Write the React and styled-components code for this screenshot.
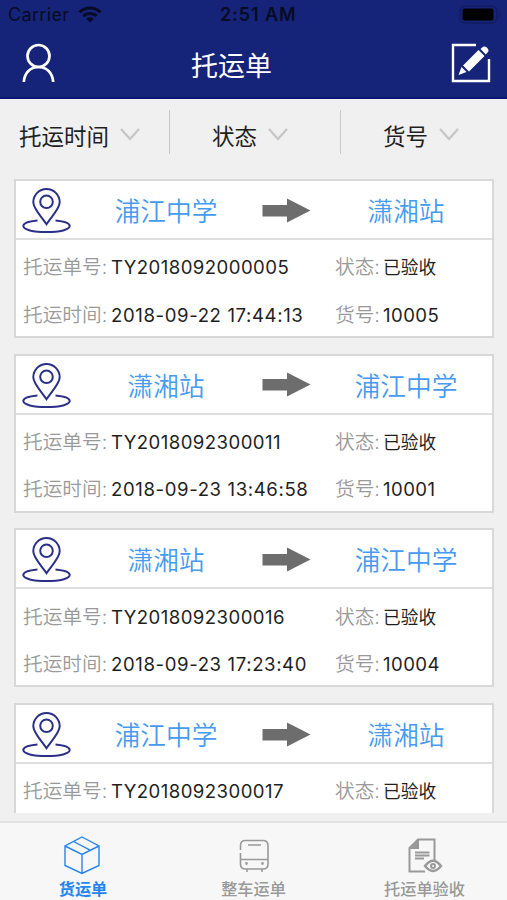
import styled, { createGlobalStyle } from 'styled-components';

const GlobalStyle = createGlobalStyle`
  * {
    box-sizing: border-box;
  }

  body {
    margin: 0;
    background-color: #f0f0f0;
    font-family: Inter, 'Noto Sans CJK SC', sans-serif;
    font-weight: 400;
    color: #1f1f1f;
  }

  svg {
    display: block;
    flex: none;
  }
`;

const Screen = styled.div`
  width: 507px;
  height: 900px;
  display: flex;
  flex-direction: column;
  overflow: hidden;
  white-space: nowrap;
`;

const Header = styled.header`
  flex: none;
  height: 99px;
  background-color: #152478;
  border-bottom: 2px solid #0a1674;
`;

const StatusBar = styled.div`
  height: 29px;
  padding: 0 5px 0 8px;
  display: grid;
  grid-template-columns: 212px auto 1fr;
  align-items: center;
  color: #070b26;
`;

const Carrier = styled.div`
  display: flex;
  align-items: center;
  gap: 9px;
  font-size: 18px;
  letter-spacing: 0.35px;
`;

const Clock = styled.div`
  font-size: 18px;
  font-weight: 600;
  letter-spacing: 0.9px;
`;

const Battery = styled.div`
  justify-self: end;
`;

const TitleBar = styled.div`
  height: 68px;
  padding: 0 16px 0 22px;
  display: grid;
  grid-template-columns: 169px auto 1fr;
  align-items: center;
`;

const Title = styled.h1`
  margin: 7px 0 0;
  font-size: 27px;
  font-weight: 400;
  line-height: 40px;
  color: #fff;
`;

const EditButton = styled.div`
  justify-self: end;
`;

const Filters = styled.div`
  flex: none;
  height: 80px;
  padding-top: 11px;
  display: grid;
  grid-template-columns: 170px 171px 1fr;
`;

const Filter = styled.div`
  height: 44px;
  padding-left: ${(props) => props.$indent}px;
  display: flex;
  align-items: center;
  gap: 11px;
  font-size: 22.5px;
  line-height: 44px;
  border-right: ${(props) => (props.$last ? 'none' : '1.5px solid #c8c8c8')};

  span {
    margin-top: 9px;
  }

  svg {
    margin-top: 4px;
  }
`;

const List = styled.main`
  flex: none;
  height: 634px;
  margin-bottom: 8px;
  padding: 0 13px 0 14px;
  overflow: hidden;
`;

const Card = styled.section`
  height: 159px;
  margin-bottom: 15.7px;
  background-color: #fff;
  border: 2px solid #d8d8d8;
`;

const Route = styled.div`
  height: 59px;
  display: grid;
  grid-template-columns: 62px 176px 66px 1fr;
  align-items: center;
  border-bottom: 2px solid #dfdfdf;
`;

const Station = styled.div`
  padding-top: 5px;
  text-align: center;
  font-size: 25.7px;
  font-weight: 350;
  line-height: 38px;
  color: #459bef;
`;

const Details = styled.div`
  padding: 2px 0 0 7px;
  display: grid;
  grid-template-columns: 312px 1fr;
  grid-auto-rows: 47.5px;
  align-items: center;
`;

const Detail = styled.div`
  display: flex;
  align-items: baseline;
`;

const Label = styled.span`
  width: ${(props) => props.$width}px;
  font-size: 19.7px;
  font-weight: 350;
  color: #999;
`;

const Value = styled.span`
  font-size: ${(props) => (props.$cjk ? 17.7 : 18.6)}px;
  letter-spacing: ${(props) => props.$spacing || 0}px;
`;

const TabBar = styled.nav`
  flex: 1;
  padding-top: 12px;
  display: grid;
  grid-template-columns: repeat(3, 1fr);
  background-color: #f7f7f7;
  border-top: 2px solid #e3e3e3;
`;

const Tab = styled.div`
  display: flex;
  flex-direction: column;
  align-items: center;
  padding-left: ${(props) => props.$inset || 0}px;
  padding-right: ${(props) => (props.$active ? 3 : 0)}px;
  color: ${(props) => (props.$active ? '#2585f0' : '#999')};
  font-size: 16.2px;
  font-weight: ${(props) => (props.$active ? 700 : 500)};
  line-height: 24px;

  svg {
    margin: 0 ${(props) => (props.$active ? 3 : 0)}px 2px 0;
  }
`;

const WifiIcon = () => (
  <svg width="24" height="17" viewBox="0 0 24 17" fill="none" stroke="currentColor" strokeWidth="3">
    <path d="M1.5 6.2C7.2.5 16.8.5 22.5 6.2" />
    <path d="M5.4 10.1C9 6.5 15 6.5 18.6 10.1" />
    <path d="M12 16.5 8.2 12.7C10.3 10.7 13.7 10.7 15.8 12.7Z" fill="currentColor" stroke="none" />
  </svg>
);

const BatteryIcon = () => (
  <svg width="43" height="20" viewBox="0 0 43 20">
    <rect x="1" y="1" width="37" height="17" rx="5" fill="none" stroke="#111d60" strokeWidth="1.5" />
    <rect x="3.5" y="3.5" width="31" height="12" rx="2" fill="#000" />
    <path d="M40 7v5c2-.6 2-4.4 0-5" fill="#111d60" />
  </svg>
);

const UserIcon = () => (
  <svg width="34" height="40" viewBox="0 0 34 40" fill="none" stroke="#fff" strokeWidth="2.7">
    <circle cx="16.5" cy="13" r="11" />
    <path d="M1.8 39C2.4 29.5 8.5 24 16.5 24S30.6 29.5 31.2 39" />
  </svg>
);

const EditIcon = () => (
  <svg width="40" height="40" viewBox="0 0 40 40" fill="none">
    <path d="M25 2H2V38H38V16" stroke="#fff" strokeWidth="2.4" />
    <path d="M7.5 32 10.5 24 15.5 29Z" fill="#fff" />
    <path d="M12 22.5 27.500 7 33.500 13 18 28.500Z" fill="#fff" />
    <path d="M29.500 6 32 3.800C34.500 2 39 6.500 37 9L34.800 11.500Z" fill="#fff" />
  </svg>
);

const ChevronIcon = () => (
  <svg width="20" height="13" viewBox="0 0 20 13" fill="none" stroke="#c6c6c6" strokeWidth="2.2">
    <path d="M1 1 10 11 19 1" />
  </svg>
);

const PinIcon = () => (
  <svg width="62" height="57" viewBox="0 0 62 57" fill="none" stroke="#2a3088" strokeWidth="2">
    <path d="M30.5 43.2C25 35 17.3 27.5 17.3 21.2A13.2 13.2 0 0 1 43.7 21.2C43.7 27.5 36 35 30.5 43.2Z" />
    <circle cx="30.5" cy="20.8" r="6.3" />
    <path d="M21.5 39.5C12 40.3 7.3 42.3 7.3 45.1C7.3 48.6 17 51.1 30.5 51.1S53.7 48.6 53.7 45.1C53.7 42.3 49 40.3 39.5 39.5" />
  </svg>
);

const ArrowIcon = () => (
  <svg width="66" height="28" viewBox="0 0 66 28">
    <path d="M8.5 9H33V2.500L56.500 14.500 33 26.500V20.500H8.500Z" fill="#6d6d6d" />
  </svg>
);

const BoxIcon = () => (
  <svg width="38" height="40" viewBox="0 0 38 40" fill="none" stroke="currentColor" strokeWidth="1.4">
    <path d="M19 2 36 11V30.5L19 38.5 2 30.5V11Z M2 11 19 19.5 36 11 M19 19.5V38.5 M10.5 6.5 27.5 15.3" />
  </svg>
);

const BusIcon = () => (
  <svg width="38" height="40" viewBox="0 0 38 40" fill="none" stroke="currentColor" strokeWidth="1.6">
    <path d="M5.5 15V10.5Q5.5 5.5 10.5 5.5H28Q33 5.5 33 10.5V29Q33 34 28 34H10.5Q5.5 34 5.5 29V18M5.5 24.5H33M13 10H26M12 34V37M27 34V37" />
    <circle cx="11.5" cy="28.5" r=".6" />
    <circle cx="27.5" cy="28.5" r=".6" />
  </svg>
);

const ReceiptIcon = () => (
  <svg width="38" height="40" viewBox="0 0 38 40" fill="none" stroke="currentColor" strokeWidth="2">
    <path d="M19 36.5H3.5V13L12 4.5H28.5V25" />
    <path d="M3.5 14 13 4V14Z" fill="currentColor" stroke="none" />
    <path d="M9 17.5H23.5M9 20.5H23.5M9 23.5H18" strokeWidth="2" />
    <path d="M19 31Q27 20.5 35 31Q27 41 19 31Z" strokeWidth="2.4" />
    <circle cx="27" cy="31" r="2" />
  </svg>
);

const orders = [
  { from: '浦江中学', to: '潇湘站', no: 'TY2018092000005', time: '2018-09-22 17:44:13', item: '10005' },
  { from: '潇湘站', to: '浦江中学', no: 'TY2018092300011', time: '2018-09-23 13:46:58', item: '10001' },
  { from: '潇湘站', to: '浦江中学', no: 'TY2018092300016', time: '2018-09-23 17:23:40', item: '10004' },
  { from: '浦江中学', to: '潇湘站', no: 'TY2018092300017' },
];

function OrderCard({ order }) {
  return (
    <Card>
      <Route>
        <PinIcon />
        <Station>{order.from}</Station>
        <ArrowIcon />
        <Station>{order.to}</Station>
      </Route>
      <Details>
        <Detail>
          <Label $width={88}>托运单号:</Label>
          <Value $spacing={0.43}>{order.no}</Value>
        </Detail>
        <Detail>
          <Label $width={48}>状态:</Label>
          <Value $cjk>已验收</Value>
        </Detail>
        {order.time && (
          <>
            <Detail>
              <Label $width={88}>托运时间:</Label>
              <Value $spacing={0.6}>{order.time}</Value>
            </Detail>
            <Detail>
              <Label $width={48}>货号:</Label>
              <Value $spacing={0.45}>{order.item}</Value>
            </Detail>
          </>
        )}
      </Details>
    </Card>
  );
}

function App() {
  return (
    <Screen>
      <GlobalStyle />
      <Header>
        <StatusBar>
          <Carrier>
            Carrier <WifiIcon />
          </Carrier>
          <Clock>2:51 AM</Clock>
          <Battery>
            <BatteryIcon />
          </Battery>
        </StatusBar>
        <TitleBar>
          <UserIcon />
          <Title>托运单</Title>
          <EditButton>
            <EditIcon />
          </EditButton>
        </TitleBar>
      </Header>
      <Filters>
        <Filter $indent={19}>
          <span>托运时间</span>
          <ChevronIcon />
        </Filter>
        <Filter $indent={42}>
          <span>状态</span>
          <ChevronIcon />
        </Filter>
        <Filter $indent={42} $last>
          <span>货号</span>
          <ChevronIcon />
        </Filter>
      </Filters>
      <List>
        {orders.map((order) => (
          <OrderCard key={order.no} order={order} />
        ))}
      </List>
      <TabBar>
        <Tab $active>
          <BoxIcon />
          货运单
        </Tab>
        <Tab>
          <BusIcon />
          整车运单
        </Tab>
        <Tab $inset={4}>
          <ReceiptIcon />
          托运单验收
        </Tab>
      </TabBar>
    </Screen>
  );
}

export default App;
